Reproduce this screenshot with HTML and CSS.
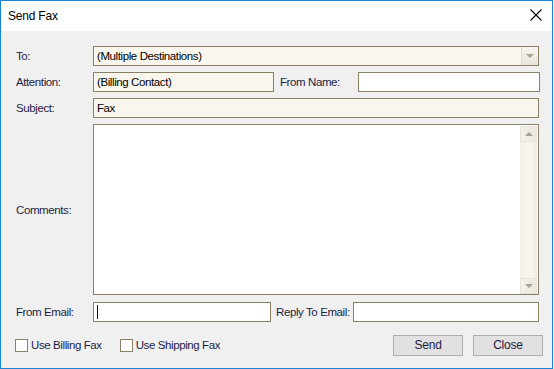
FILE: index.html
```html
<!DOCTYPE html>
<html lang="en">
<head>
    <meta charset="UTF-8">
    <title>Send Fax</title>
    <link rel="stylesheet" href="styles.css">
</head>
<body>
    <div class="window">
        <header class="titlebar">
            <span class="title">Send Fax</span>
            <svg class="close-x" width="12" height="12" viewBox="0 0 12 12">
                <path d="M0.5 0.5 L11.5 11.5 M11.5 0.5 L0.5 11.5" stroke="#000" stroke-width="1.1" fill="none"/>
            </svg>
        </header>

        <div class="content">
            <div class="row">
                <label class="lbl">To:</label>
                <div class="field readonly combo">
                    <span class="val">(Multiple Destinations)</span>
                    <span class="combo-btn"><span class="tri-down"></span></span>
                </div>
            </div>

            <div class="row">
                <label class="lbl">Attention:</label>
                <div class="field readonly w-att"><span class="val">(Billing Contact)</span></div>
                <label class="lbl lbl-mid">From Name:</label>
                <div class="field w-from"></div>
            </div>

            <div class="row">
                <label class="lbl">Subject:</label>
                <div class="field readonly"><span class="val">Fax</span></div>
            </div>

            <div class="row row-comments">
                <label class="lbl">Comments:</label>
                <div class="field memo">
                    <div class="memo-text"></div>
                    <div class="vscroll">
                        <span class="sb-btn"><span class="tri-up"></span></span>
                        <span class="sb-track"></span>
                        <span class="sb-btn"><span class="tri-down"></span></span>
                    </div>
                </div>
            </div>

            <div class="row row-email">
                <label class="lbl">From Email:</label>
                <div class="field w-email"><span class="caret"></span></div>
                <label class="lbl lbl-reply">Reply To Email:</label>
                <div class="field w-reply"></div>
            </div>

            <div class="footer">
                <label class="check"><span class="box"></span>Use Billing Fax</label>
                <label class="check"><span class="box"></span>Use Shipping Fax</label>
                <div class="buttons">
                    <button class="btn">Send</button>
                    <button class="btn">Close</button>
                </div>
            </div>
        </div>
    </div>
</body>
</html>
```

FILE: styles.css
```css
* {
    margin: 0;
    padding: 0;
    box-sizing: border-box;
}

body {
    width: 554px;
    height: 369px;
    background: #fff;
    font-family: "Liberation Sans", Arial, sans-serif;
    font-size: 11.5px;
    letter-spacing: -0.4px;
    color: #000;
    overflow: hidden;
}

.window {
    width: 553px;
    height: 369px;
    border: 1px solid #1883d7;
    background: #f0f0f0;
    display: flex;
    flex-direction: column;
}

.titlebar {
    height: 30px;
    background: #fff;
    display: flex;
    align-items: center;
    justify-content: space-between;
    padding: 0 10px 0 7px;
}

.title {
    font-size: 12px;
    letter-spacing: -0.2px;
    margin-top: -1px;
}

.close-x {
    margin-top: -2px;
}

.content {
    padding: 15px 13px 0 15px;
    display: flex;
    flex-direction: column;
}

.row {
    display: flex;
    align-items: center;
    height: 20px;
    margin-bottom: 6px;
}

.lbl {
    width: 77px;
    flex: none;
    color: #1c1c44;
}

.lbl-mid {
    width: 78px;
    margin-left: 6px;
}

.lbl-reply {
    width: 77px;
    margin-left: 5px;
}

.field {
    height: 20px;
    border: 1px solid #8c8064;
    background: #fff;
    flex: 1;
    display: flex;
    align-items: center;
    position: relative;
}

.readonly {
    background: #f9f6ee;
}

.val {
    padding-left: 3px;
}

.w-att { flex: none; width: 181px; }
.w-from { flex: none; width: 182px; }
.w-email { flex: none; width: 178px; }
.w-reply { flex: none; width: 186px; }

.combo {
    justify-content: space-between;
}

.combo-btn {
    width: 17px;
    height: 18px;
    border-left: 1px solid #e2ddd0;
    background: linear-gradient(#f6f4ee, #e9e5da);
    display: flex;
    align-items: center;
    justify-content: center;
}

.tri-down {
    width: 0;
    height: 0;
    border-left: 4px solid transparent;
    border-right: 4px solid transparent;
    border-top: 4px solid #a7a296;
}

.tri-up {
    width: 0;
    height: 0;
    border-left: 4px solid transparent;
    border-right: 4px solid transparent;
    border-bottom: 4px solid #a7a296;
}

.row-comments {
    height: 171px;
    margin-bottom: 7px;
}

.memo {
    height: 171px;
    align-items: stretch;
}

.memo-text {
    flex: 1;
}

.vscroll {
    width: 17px;
    margin: 1px 1px 0 0;
    display: flex;
    flex-direction: column;
    background: #f6f4ec;
}

.sb-btn {
    height: 16px;
    background: linear-gradient(90deg, #f3f1ea, #ece8de);
    border: 1px solid #e8e4d8;
    display: flex;
    align-items: center;
    justify-content: center;
}

.sb-track {
    flex: 1;
    background: linear-gradient(90deg, #f1eee5, #f9f7f1 60%, #efece3);
}

.row-email {
    height: 20px;
    margin-bottom: 0;
}

.caret {
    width: 1px;
    height: 14px;
    background: #000;
    margin-left: 3px;
}

.footer {
    display: flex;
    align-items: center;
    margin-top: 12px;
    margin-right: -4px;
    height: 22px;
}

.check {
    display: flex;
    align-items: center;
    color: #1c1c44;
    margin-left: -1px;
    margin-right: 19px;
}

.box {
    width: 13px;
    height: 13px;
    border: 1px solid #8c8064;
    background: #fff;
    margin-right: 3px;
}

.buttons {
    margin-left: auto;
    display: flex;
    gap: 10px;
}

.btn {
    width: 70px;
    height: 21px;
    font-family: inherit;
    font-size: 12px;
    letter-spacing: -0.2px;
    color: #1c1c44;
    background: #e1e1e1;
    border: 1px solid #adadad;
}
```
